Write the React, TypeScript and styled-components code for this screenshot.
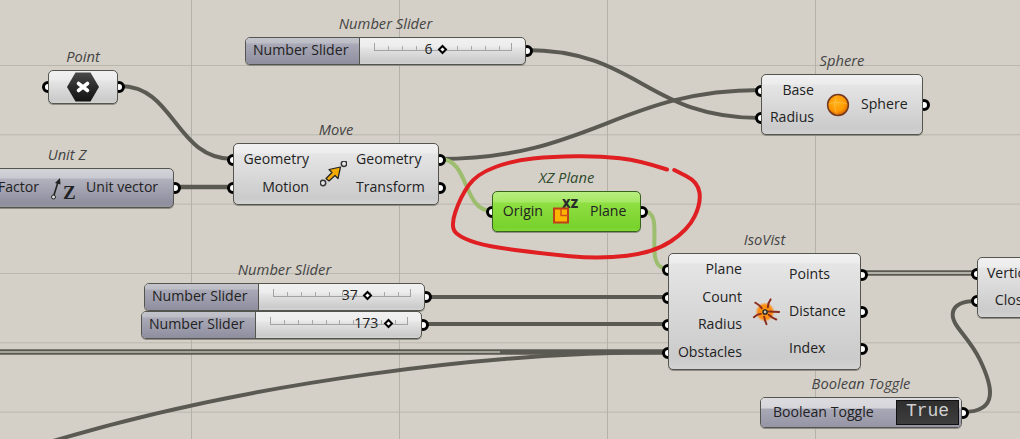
import React from 'react';
import styled, { createGlobalStyle } from 'styled-components';

const GlobalStyle = createGlobalStyle`
    html, body {
        margin: 0;
        padding: 0;
        background: #d4d0c8;
    }
`;

const Canvas = styled.div`
    position: relative;
    isolation: isolate;
    width: 1020px;
    height: 439px;
    overflow: hidden;
    background-color: #d4d0c8;
    background-image:
        linear-gradient(90deg, #b3b1a8 1px, transparent 1px),
        linear-gradient(180deg, #b9b7ae 1px, transparent 1px);
    background-size: 208px 100%, 100% 69.33px;
    background-position: 191px 0, 0 65px;
    font-family: "Open Sans", "Noto Sans", sans-serif;
    font-size: 14.1px;
    color: #222;
`;

const Layer = styled.svg<{ $top?: boolean }>`
    position: absolute;
    top: 0;
    left: 0;
    z-index: ${props => (props.$top ? 5 : -2)};
    pointer-events: none;
`;

const bodies = {
    plain: 'linear-gradient(180deg, #f1f1f1 0, #ececec 9px, #e5e5e5 10px, #cbcbcb 90%, #d2d2d2 100%)',
    dark: 'linear-gradient(180deg, #d3d3da 0, #c9c9d1 9px, #b2b2be 10px, #8e8e9e 90%, #96969f 100%)',
    green: 'linear-gradient(180deg, #b9ee82 0, #a6e864 10px, #8fdf42 11px, #78d22c 90%, #82da38 100%)',
};

const Node = styled.div<{ $x: number; $y: number; $w: number; $h: number; $kind?: keyof typeof bodies }>`
    position: absolute;
    left: ${props => props.$x}px;
    top: ${props => props.$y}px;
    width: ${props => props.$w}px;
    height: ${props => props.$h}px;
    box-sizing: border-box;
    border: 1px solid ${props => (props.$kind === 'green' ? '#37641a' : '#55554f')};
    border-radius: 5px;
    background: ${props => bodies[props.$kind || 'plain']};
    box-shadow: 0 1px 0 #8f8d85;
`;

const Caption = styled.div<{ $color?: string }>`
    position: absolute;
    left: -40px;
    right: -40px;
    top: -25px;
    height: 20px;
    line-height: 20px;
    text-align: center;
    font-size: 14.7px;
    font-style: italic;
    color: ${props => props.$color || '#444'};
`;

const Columns = styled.div<{ $cols: string }>`
    display: grid;
    grid-template-columns: ${props => props.$cols};
    height: 100%;
`;

const Pins = styled.div`
    display: flex;
    flex-direction: column;
    padding: 2px 0;
    box-sizing: border-box;
    height: 100%;
`;

const Pin = styled.div<{ $side: 'in' | 'out' }>`
    position: relative;
    flex: 1;
    display: flex;
    align-items: center;
    justify-content: ${props => (props.$side === 'in' ? 'flex-end' : 'flex-start')};
    padding: ${props => (props.$side === 'in' ? '0 10px 3px 0' : '0 0 3px 9px')};
    white-space: nowrap;
`;

const Port = styled.span<{ $side: 'in' | 'out' }>`
    position: absolute;
    top: 50%;
    ${props => (props.$side === 'in' ? 'left: -7px;' : 'right: -8px;')}
    width: 12px;
    height: 12px;
    margin-top: -6px;
    box-sizing: border-box;
    border: 3px solid #000;
    border-radius: 50%;
    background: #fff;
    z-index: -1;
`;

const IconSlot = styled.div`
    display: flex;
    align-items: center;
    justify-content: center;
`;

const PointBody = styled.div`
    display: flex;
    align-items: center;
    justify-content: center;
    height: 100%;
`;

const SliderRow = styled.div`
    display: flex;
    height: 100%;
    border-radius: 4px;
    overflow: hidden;
`;

const SliderName = styled.div<{ $w: number }>`
    flex: none;
    width: ${props => props.$w}px;
    padding: 0 0 3px 7px;
    box-sizing: border-box;
    display: flex;
    align-items: center;
    white-space: nowrap;
    border-right: 1px solid #55554f;
    background: linear-gradient(180deg, #c3c3cb 0, #bdbdc6 5px, #a9a9b7 6px, #8e8e9f 100%);
`;

const Track = styled.div`
    flex: 1;
    display: flex;
    align-items: flex-start;
    padding: 5px 13px 0 14px;
`;

const Rule = styled.div`
    position: relative;
    flex: 1;
    height: 8px;
    box-sizing: border-box;
    border-left: 1px solid #a3a3a3;
    border-right: 1px solid #a3a3a3;
    border-bottom: 1px solid #a3a3a3;
    background-image: repeating-linear-gradient(90deg, transparent 0 12.9px, #a8a8a8 12.9px 13.9px);
    background-size: 100% 4px;
    background-position: 0 100%;
    background-repeat: no-repeat;
`;

const Grip = styled.span`
    position: absolute;
    top: 3px;
    width: 7px;
    height: 7px;
    margin-left: -3.5px;
    box-sizing: border-box;
    border: 2px solid #000;
    background: #fff;
    transform: rotate(45deg);
`;

const SliderValue = styled.span`
    position: absolute;
    top: -4px;
    height: 20px;
    line-height: 20px;
    transform: translateX(-100%);
    margin-left: -10px;
`;

const ToggleName = styled.div`
    flex: 1;
    display: flex;
    align-items: center;
    padding: 0 0 3px 12px;
    white-space: nowrap;
    background: linear-gradient(180deg, #dcdce0 0, #d6d6da 10px, #a8a8b6 11px, #9595a5 100%);
`;

const ToggleFrame = styled.div`
    flex: none;
    display: flex;
    padding: 2px 2px 2px 0;
    background: linear-gradient(180deg, #dcdce0 0, #d6d6da 10px, #a8a8b6 11px, #9595a5 100%);
`;

const ToggleBox = styled.div`
    width: 63px;
    box-sizing: border-box;
    display: flex;
    align-items: center;
    justify-content: center;
    padding-bottom: 3px;
    border: 1px solid #111;
    background: linear-gradient(180deg, #2e2e2e 0, #3e3e3e 100%);
    color: #cfcfcf;
    font-family: "Liberation Mono", "DejaVu Sans Mono", monospace;
    font-size: 18px;
`;

const WIRE = '#5b5a52';
const GREEN = '#9dbe6e';

// soft line through hand-read points
const smooth = (pts: number[][]) => {
    let d = `M${pts[0][0]},${pts[0][1]}`;
    for (let i = 1; i < pts.length - 1; i++) {
        const mx = (pts[i][0] + pts[i + 1][0]) / 2;
        const my = (pts[i][1] + pts[i + 1][1]) / 2;
        d += ` Q${pts[i][0]},${pts[i][1]} ${mx},${my}`;
    }
    const last = pts[pts.length - 1];
    return `${d} L${last[0]},${last[1]}`;
};

const redLoop = [
    [667, 169.5], [640, 160.5], [600, 156], [553, 156.5], [513, 160.5], [476.7, 174], [460.5, 196.7],
    [450, 228], [463.3, 239], [490, 246.7], [540, 253.3], [600, 259], [654, 252.5],
    [688, 230], [701, 203.3], [698, 182], [674.3, 170],
];

const Wires = () => (
    <Layer width={1020} height={439}>
        <g fill="none" stroke={WIRE} strokeWidth={4}>
            <path d="M120,86 C175,86 175,159 233,159" />
            <path d="M173,187 L233,187" strokeWidth={4.5} />
            <path d="M525,50 C640,50 645,118 761,118" />
            <path d="M438,159 C590,159 620,90 761,90" />
            <path d="M425,297 L668,297" />
            <path d="M422,324 L668,324" />
            <path d="M963,412 C1000,412 992,385 980,360 C968,335 950,325 953,312 C955,303 965,301 977,301" />
            <path d="M665,352 C500,352 250,380 40,445" />
        </g>
        <g fill="none" stroke={GREEN} strokeWidth={4}>
            <path d="M440,159 C470,159 462,211 492,211" />
            <path d="M643,211 C668,211 640,269 668,269" />
        </g>
        <g fill="none">
            <path d="M0,352 L668,352" stroke={WIRE} strokeWidth={5.5} />
            <path d="M0,352 L500,352" stroke="#bdbcb0" strokeWidth={1.5} />
            <path d="M860,273 L977,273" stroke={WIRE} strokeWidth={5.5} />
            <path d="M860,273 L977,273" stroke="#d0cec6" strokeWidth={1.5} />
        </g>
    </Layer>
);

const PointIcon = () => (
    <svg width="34" height="32" viewBox="0 0 34 32">
        <defs>
            <linearGradient id="hex" x1="0" y1="0" x2="0" y2="1">
                <stop offset="0" stopColor="#4a4a4a" />
                <stop offset="0.5" stopColor="#2a2a2a" />
                <stop offset="1" stopColor="#141414" />
            </linearGradient>
        </defs>
        <path d="M9.5,1.5 H24.5 L33,16 L24.5,30.5 H9.5 L1,16 Z" fill="url(#hex)" />
        <path d="M12.5,12.5 L21.5,19.5 M21.5,12.5 L12.5,19.5" stroke="#fff" strokeWidth="3.6" strokeLinecap="round" />
    </svg>
);

const UnitZIcon = () => (
    <svg width="27" height="26" viewBox="0 0 27 26">
        <path d="M3.5,21.5 L8,7" stroke="#222" strokeWidth="1.6" />
        <path d="M10,3 L5,8 L10.5,9.5 Z" fill="#222" />
        <circle cx="3.5" cy="22" r="2" fill="#ddd" stroke="#222" />
        <text x="13" y="24" fontFamily="'Liberation Serif', serif" fontWeight="700" fontSize="19" fill="#222">Z</text>
    </svg>
);

const MoveIcon = () => (
    <svg width="27" height="27" viewBox="0 0 27 27">
        <path d="M20.5,6 L9,8.5 L12,11.5 L6,17.5 L9,20 L15,14.5 L18,17.5 Z" fill="#f2a900" stroke="#222" strokeWidth="1.2" strokeLinejoin="round" />
        <circle cx="3" cy="22" r="2.7" fill="#e6e6e6" stroke="#333" strokeWidth="1.5" />
        <circle cx="24" cy="2.8" r="2.7" fill="#e6e6e6" stroke="#333" strokeWidth="1.5" />
    </svg>
);

const SphereIcon = () => (
    <svg width="24" height="24" viewBox="0 0 24 24">
        <defs>
            <radialGradient id="ball" cx="0.45" cy="0.4" r="0.62">
                <stop offset="0" stopColor="#ffb41a" />
                <stop offset="0.65" stopColor="#ff9800" />
                <stop offset="1" stopColor="#cf5a00" />
            </radialGradient>
        </defs>
        <circle cx="12" cy="12" r="10.4" fill="url(#ball)" stroke="#74391f" strokeWidth="1.5" />
        <path d="M11,2.5 C8,8 8,16 11,21.5 M2.5,11 C8,9 16,9 21.5,11" fill="none" stroke="#ffcf70" strokeWidth="0.7" opacity="0.7" />
    </svg>
);

const PlaneIcon = () => (
    <svg width="28" height="28" viewBox="0 0 28 28" overflow="visible">
        <text x="9" y="9.5" fontFamily="'Open Sans', sans-serif" fontWeight="800" fontSize="12" fill="#2b2b2b">XZ</text>
        <rect x="1" y="10.5" width="14" height="14" fill="#ffb400" stroke="#bf3f18" strokeWidth="2" />
        <path d="M8,10.5 V17.5 H15" fill="none" stroke="#cf4f18" strokeWidth="1.5" />
    </svg>
);

const IsoVistIcon = () => (
    <svg width="30" height="30" viewBox="0 0 30 30">
        <defs>
            <radialGradient id="star" cx="0.5" cy="0.5" r="0.5">
                <stop offset="0" stopColor="#ff9a10" />
                <stop offset="0.7" stopColor="#ff8c10" />
                <stop offset="1" stopColor="#ff8c10" stopOpacity="0" />
            </radialGradient>
        </defs>
        <circle cx="14" cy="15" r="10.5" fill="url(#star)" />
        <path d="M10.5,11 C9,8 7,7 3.5,5 M17,10 C17,7 18,4 20,1.5 M18,14.5 C21,14.5 25,14.5 29,15 M18,18 C20,20 23,22 26,23 M13,20 C13.5,23 14,25 15.5,28 M9.5,17 C7,17 5,18 2,20.5" fill="none" stroke="#8a2c1e" strokeWidth="2.1" strokeLinecap="round" />
        <circle cx="14" cy="15" r="2.3" fill="#c8c0b0" stroke="#222" strokeWidth="1.5" />
    </svg>
);

const PinColumn = ({ side, names }: { side: 'in' | 'out'; names: string[] }) => (
    <Pins>
        {names.map(name => (
            <Pin key={name} $side={side}>
                <Port $side={side} />
                {name}
            </Pin>
        ))}
    </Pins>
);

interface CompProps {
    x: number;
    y: number;
    w: number;
    h: number;
    cols: string;
    caption?: string;
    captionColor?: string;
    kind?: keyof typeof bodies;
    inputs: string[];
    outputs: string[];
    icon: React.ReactNode;
}

const Component = ({ x, y, w, h, cols, caption, captionColor, kind, inputs, outputs, icon }: CompProps) => (
    <Node $x={x} $y={y} $w={w} $h={h} $kind={kind}>
        {caption && <Caption $color={captionColor}>{caption}</Caption>}
        <Columns $cols={cols}>
            <PinColumn side="in" names={inputs} />
            <IconSlot>{icon}</IconSlot>
            <PinColumn side="out" names={outputs} />
        </Columns>
    </Node>
);

interface SliderProps {
    x: number;
    y: number;
    value: string;
    at: number;
    caption?: string;
}

const Slider = ({ x, y, value, at, caption }: SliderProps) => (
    <Node $x={x} $y={y} $w={281} $h={28}>
        {caption && <Caption>{caption}</Caption>}
        <Port $side="out" />
        <SliderRow>
            <SliderName $w={114}>Number Slider</SliderName>
            <Track>
                <Rule>
                    <SliderValue style={{ left: `${at}%` }}>{value}</SliderValue>
                    <Grip style={{ left: `${at}%` }} />
                </Rule>
            </Track>
        </SliderRow>
    </Node>
);

const App = () => (
    <Canvas>
        <GlobalStyle />
        <Wires />

        <Node $x={48} $y={70} $w={70} $h={34}>
            <Caption>Point</Caption>
            <Port $side="in" />
            <Port $side="out" />
            <PointBody>
                <PointIcon />
            </PointBody>
        </Node>

        <Slider x={245} y={37} value="6" at={49.6} caption="Number Slider" />

        <Component
            x={-40} y={168} w={214} h={40} cols="88px 28px 1fr"
            kind="dark" caption="Unit Z"
            inputs={['Factor']} outputs={['Unit vector']} icon={<UnitZIcon />}
        />

        <Component
            x={233} y={143} w={206} h={62} cols="85px 28px 1fr"
            caption="Move"
            inputs={['Geometry', 'Motion']} outputs={['Geometry', 'Transform']} icon={<MoveIcon />}
        />

        <Component
            x={761} y={74} w={162} h={61} cols="62px 28px 1fr"
            caption="Sphere"
            inputs={['Base', 'Radius']} outputs={['Sphere']} icon={<SphereIcon />}
        />

        <Component
            x={492} y={191} w={149} h={41} cols="60px 28px 1fr"
            kind="green" caption="XZ Plane" captionColor="#2e4a2c"
            inputs={['Origin']} outputs={['Plane']} icon={<PlaneIcon />}
        />

        <Component
            x={668} y={253} w={193} h={117} cols="83px 28px 1fr"
            caption="IsoVist"
            inputs={['Plane', 'Count', 'Radius', 'Obstacles']} outputs={['Points', 'Distance', 'Index']} icon={<IsoVistIcon />}
        />

        <Slider x={144} y={283} value="37" at={69} caption="Number Slider" />
        <Slider x={141} y={311} value="173" at={86.3} />

        <Component
            x={977} y={257} w={130} h={61} cols="71px 20px 1fr"
            inputs={['Vertices', 'Closed']} outputs={[]} icon={null}
        />

        <Node $x={760} $y={397} $w={202} $h={31}>
            <Caption>Boolean Toggle</Caption>
            <Port $side="out" />
            <SliderRow>
                <ToggleName>Boolean Toggle</ToggleName>
                <ToggleFrame>
                    <ToggleBox>True</ToggleBox>
                </ToggleFrame>
            </SliderRow>
        </Node>

        <Layer $top width={1020} height={439}>
            <path d={smooth(redLoop)} fill="none" stroke="#e01f22" strokeWidth={4} strokeLinecap="round" strokeLinejoin="round" />
        </Layer>
    </Canvas>
);

export default App;
